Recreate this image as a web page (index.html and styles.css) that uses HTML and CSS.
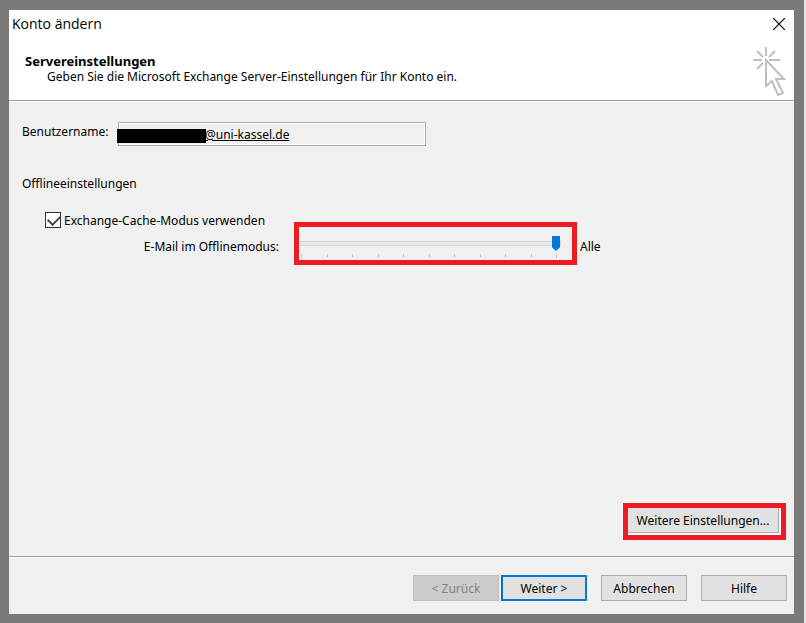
FILE: index.html
```html
<!DOCTYPE html>
<html lang="de">
<head>
  <meta charset="UTF-8">
  <meta name="viewport" content="width=device-width, initial-scale=1.0">
  <title>Konto ändern</title>
  <link rel="stylesheet" href="styles.css">
</head>
<body>
  <form class="dialog">
    <header class="dialog-header">
      <div class="titlebar">
        <h1>Konto ändern</h1>
        <button type="button" class="close" aria-label="Schließen">
          <svg width="12" height="12" viewBox="0 0 12 12"><path d="M0 0L12 12M12 0L0 12" stroke="#000" stroke-width="1.2" /></svg>
        </button>
      </div>
      <div class="intro">
        <div>
          <h2>Servereinstellungen</h2>
          <p>Geben Sie die Microsoft Exchange Server-Einstellungen für Ihr Konto ein.</p>
        </div>
        <svg class="cursor-icon" width="34" height="50" viewBox="0 0 34 50" fill="none" stroke="#bfbfbf" stroke-width="2">
          <path d="M13 0V9M0 13H9M16 13H27M4 4L10 10M22 4L16 10M4 22L10 16" />
          <path d="M13 13V39L19 34L25 48L30 46L23 32H31Z" />
        </svg>
      </div>
    </header>

    <main>
      <div class="user-row">
        <label for="username">Benutzername:</label>
        <div class="user-field">
          <input type="text" id="username" value="@uni-kassel.de" readonly>
          <span class="redacted"></span>
        </div>
      </div>

      <h3>Offlineeinstellungen</h3>
      <div class="check-row">
        <input type="checkbox" id="cache" checked>
        <label for="cache">Exchange-Cache-Modus verwenden</label>
      </div>
      <div class="slider-row">
        <label for="offline">E-Mail im Offlinemodus:</label>
        <div class="slider highlight">
          <input type="range" id="offline" min="0" max="10" value="10">
          <div class="ticks">
            <i></i><i></i><i></i><i></i><i></i><i></i><i></i><i></i><i></i><i></i><i></i>
          </div>
        </div>
        <output for="offline">Alle</output>
      </div>

      <div class="more highlight">
        <button type="button">Weitere Einstellungen...</button>
      </div>
    </main>

    <footer>
      <button type="button" class="back" disabled>&lt; Zurück</button>
      <button type="submit" class="next">Weiter &gt;</button>
      <button type="button">Abbrechen</button>
      <button type="button">Hilfe</button>
    </footer>
  </form>
</body>
</html>
```
FILE: styles.css
```css
* {
  box-sizing: border-box;
}

body {
  display: flex;
  min-height: 100vh;
  margin: 0;
  padding: 10px 10px 9px 9px;
  border-right: 2px solid #e6e6e6;
  background-color: #7b7a78;
  color: #000;
  font-family: "Noto Sans", "Open Sans", sans-serif;
  font-size: 12px;
  line-height: 16px;
}

h1, h2, h3, p {
  margin: 0;
  font-size: inherit;
  font-weight: normal;
}

button, input {
  margin: 0;
  padding: 0;
  color: inherit;
  font: inherit;
}

.dialog {
  display: flex;
  flex-direction: column;
  flex: 1;
  background-color: #f0f0f0;
}

.dialog-header {
  height: 91px;
  background-color: #fff;
  border-bottom: 1px solid #a0a0a0;
  box-shadow: 0 1px #fff;
}

.titlebar {
  display: flex;
  justify-content: space-between;
  align-items: center;
  height: 27px;
  padding: 0 9px 0 3px;
}

.titlebar h1 {
  font-family: "Open Sans", sans-serif;
  font-size: 14px;
}

.close {
  display: flex;
  border: 0;
  background: none;
}

.intro {
  display: flex;
  justify-content: space-between;
  padding: 10px 7px 0 16px;
}

.intro > div {
  padding-top: 6px;
}

.intro h2 {
  font-size: 13px;
  font-weight: bold;
}

.intro p {
  padding-left: 22px;
}

main {
  display: flex;
  flex-direction: column;
  flex: 1;
  padding: 21px 13px 20px;
}

.user-row {
  display: flex;
}

.user-row label {
  width: 96px;
  padding-top: 2px;
}

.user-field {
  position: relative;
  width: 308px;
}

.user-field input {
  width: 100%;
  height: 24px;
  padding-left: 86px;
  border: 1px solid #abadb3;
  box-shadow: inset 0 0 0 1px #fff;
  background-color: #f0f0f0;
  text-decoration: underline;
}

/* verdeckt den persönlichen Teil der Adresse */
.redacted {
  position: absolute;
  top: 7px;
  left: -1px;
  width: 89px;
  height: 14px;
  background-color: #000;
}

h3 {
  margin-top: 30px;
}

.check-row {
  display: flex;
  align-items: center;
  gap: 3px;
  margin: 19px 0 0 23px;
}

.check-row label {
  padding-top: 2px;
}

.check-row input {
  appearance: none;
  width: 16px;
  height: 16px;
  border: 1px solid #333;
  background-color: #fff;
}

.check-row input:checked::before {
  content: "";
  display: block;
  width: 10px;
  height: 6px;
  margin: 3px 2px;
  border: solid #444;
  border-width: 0 0 2px 2px;
  transform: translateY(-1px) rotate(-45deg);
}

.slider-row {
  display: flex;
  align-items: center;
  margin-top: -2px;
}

.slider-row label {
  width: 277px;
  padding: 6px 20px 0 0;
  text-align: right;
}

.slider-row output {
  padding: 6px 0 0 8px;
}

.highlight {
  outline: 5px solid #ed1c24;
}

.slider {
  width: 273px;
  height: 33px;
}

.slider input {
  appearance: none;
  display: block;
  width: 262px;
  height: 15px;
  margin-top: 9px;
  background: none;
}

.slider input::-webkit-slider-runnable-track {
  height: 5px;
  border: 1px solid #d6d6d6;
  border-left: 0;
  background-color: #e7eaea;
}

.slider input::-webkit-slider-thumb {
  appearance: none;
  width: 8px;
  height: 15px;
  margin-top: -6px;
  background-color: #0078d7;
  clip-path: polygon(0 0, 100% 0, 100% 75%, 50% 100%, 0 75%);
}

.ticks {
  display: flex;
  justify-content: space-between;
  width: 256px;
  margin: 3px 0 0 2px;
}

.ticks i {
  width: 1px;
  height: 3px;
  background-color: #c4c4c4;
}

.ticks i:first-child,
.ticks i:last-child {
  height: 4px;
}

.more {
  align-self: flex-end;
  width: 153px;
  height: 27px;
  margin-top: auto;
  margin-bottom: 1px;
  background-color: #f8f8f8;
}

.more button {
  width: 151px;
  height: 25px;
  border-width: 0 1px 1px 0;
}

button:not(.close) {
  padding-top: 2px;
  border-color: #adadad;
  border-style: solid;
  background-color: #e1e1e1;
}

footer {
  display: flex;
  justify-content: flex-end;
  padding: 18px 7px 13px;
  border-top: 1px solid #a0a0a0;
  box-shadow: inset 0 1px #fff;
}

footer button {
  width: 86px;
  height: 26px;
  margin-left: 14px;
  border-width: 1px;
}

footer .back {
  border-color: #bfbfbf;
  background-color: #ccc;
  color: #838383;
}

footer .next {
  margin-left: 2px;
  border: 2px solid #0078d7;
}
```
